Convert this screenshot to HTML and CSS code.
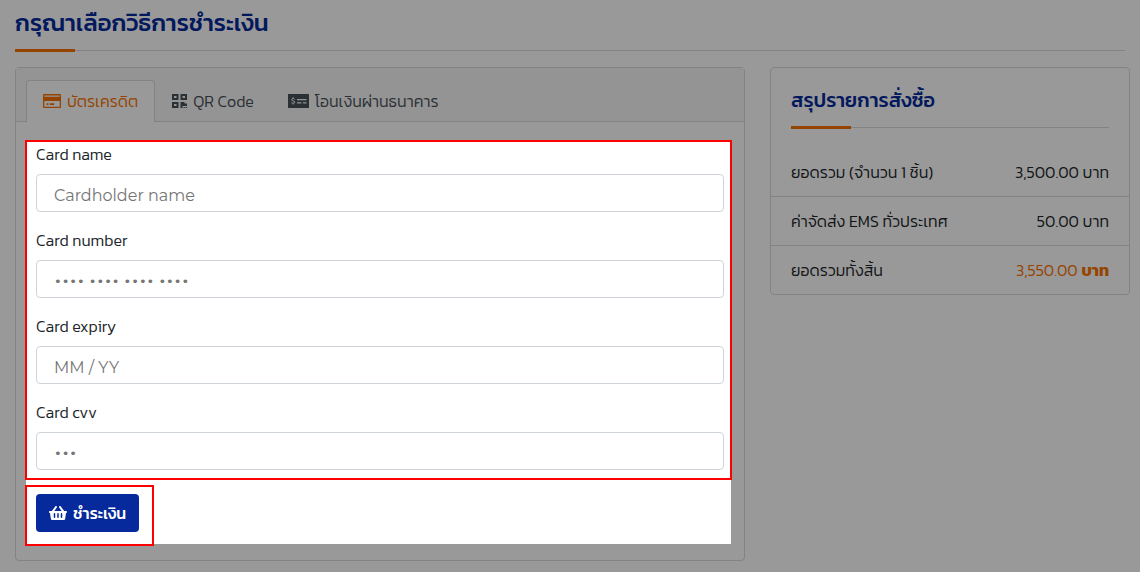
FILE: index.html
```
<!DOCTYPE html>
<html lang="th">
<head>
    <meta charset="UTF-8">
    <meta name="viewport" content="width=device-width, initial-scale=1.0">
    <title>ชำระเงิน</title>
    <link rel="stylesheet" href="styles.css">
</head>
<body>
    <h1 class="page-title">กรุณาเลือกวิธีการชำระเงิน</h1>

    <div class="row">
        <main class="col-main">
            <div class="card">
                <nav class="tabs">
                    <a href="#credit" class="tab active">
                        <svg class="icon" width="18" height="14" viewBox="0 0 18 14" fill="currentColor"><path fill-rule="evenodd" d="M1 0h16a1 1 0 0 1 1 1v12a1 1 0 0 1-1 1H1a1 1 0 0 1-1-1V1a1 1 0 0 1 1-1zm.3 1.500v1.300h15.400V1.500zM1.300 7v5.700h15.400V7zM3.500 9.300h2v1.700h-2zm3.300 0h4.400v1.700H6.800z"/></svg>
                        <span>บัตรเครดิต</span>
                    </a>
                    <a href="#qr" class="tab">
                        <svg class="icon" width="15" height="14" viewBox="0 0 15 14" fill="currentColor"><path fill-rule="evenodd" d="M0 0h6.500v6H0zm2 2v2h2.500V2zM8.500 0H15v6H8.500zm2 2v2H13V2zM0 8h6.500v6H0zm2 2v2h2.500v-2zM8.500 8h4v1.500H15V12h-4.500v2h-2zM11.500 13h1.300v1h-1.300zM13.700 13H15v1h-1.300z"/></svg>
                        <span>QR Code</span>
                    </a>
                    <a href="#transfer" class="tab">
                        <svg class="icon" width="21" height="14" viewBox="0 0 21 14" fill="currentColor"><path fill-rule="evenodd" d="M0 0h21v14H0zM9 5v1.200h9.500V5zm0 3.200v1.200h4.500V8.200zm6 0v1.200h3.500V8.200z"/><path class="icon-line" d="M6.700 5.200C6 4.300 3.600 4.400 3.600 5.700c0 1.600 3.200.8 3.200 2.400 0 1.400-2.600 1.400-3.400.5M5.100 3.300v1.300M5.100 9.200v1.300"/></svg>
                        <span>โอนเงินผ่านธนาคาร</span>
                    </a>
                </nav>

                <div class="card-body">
                    <form class="spotlight">
                        <div class="frame frame-fields">
                            <div class="field">
                                <label for="card-name">Card name</label>
                                <input type="text" id="card-name" placeholder="Cardholder name">
                            </div>
                            <div class="field">
                                <label for="card-number">Card number</label>
                                <input type="text" id="card-number" class="masked" placeholder="•••• •••• •••• ••••">
                            </div>
                            <div class="field">
                                <label for="card-expiry">Card expiry</label>
                                <input type="text" id="card-expiry" placeholder="MM / YY">
                            </div>
                            <div class="field">
                                <label for="card-cvv">Card cvv</label>
                                <input type="text" id="card-cvv" class="masked" placeholder="•••">
                            </div>
                        </div>
                        <div class="frame frame-pay">
                            <button type="button" class="btn-pay">
                                <svg class="icon" width="18" height="16" viewBox="0 0 576 512" fill="currentColor"><path d="M576 216v16c0 13.300-10.700 24-24 24h-8l-26.100 182.800C514.500 462.400 494.300 480 470.400 480H105.600c-23.900 0-44.100-17.600-47.500-41.200L32 256h-8c-13.300 0-24-10.700-24-24v-16c0-13.300 10.700-24 24-24h67.300l106.800-146.800c10.400-14.300 30.400-17.500 44.700-7.100s17.500 30.400 7.100 44.700L170.500 192h235.100L326.100 82.800c-10.400-14.300-7.200-34.300 7.100-44.700s34.300-7.200 44.700 7.100L484.700 192H552c13.300 0 24 10.700 24 24zM312 392V280c0-13.300-10.700-24-24-24s-24 10.700-24 24v112c0 13.300 10.700 24 24 24s24-10.700 24-24zm112 0V280c0-13.300-10.700-24-24-24s-24 10.700-24 24v112c0 13.300 10.700 24 24 24s24-10.700 24-24zm-224 0V280c0-13.300-10.700-24-24-24s-24 10.700-24 24v112c0 13.300 10.700 24 24 24s24-10.700 24-24z"/></svg>
                                <span>ชำระเงิน</span>
                            </button>
                        </div>
                    </form>
                </div>
            </div>
        </main>

        <aside class="col-side">
            <div class="card">
                <h2 class="summary-title">สรุปรายการสั่งซื้อ</h2>
                <ul class="summary">
                    <li><span>ยอดรวม (จำนวน 1 ชิ้น)</span><span>3,500.00 บาท</span></li>
                    <li><span>ค่าจัดส่ง EMS ทั่วประเทศ</span><span>50.00 บาท</span></li>
                    <li><span>ยอดรวมทั้งสิ้น</span><span class="total">3,550.00 <b>บาท</b></span></li>
                </ul>
            </div>
        </aside>
    </div>
</body>
</html>
```
FILE: styles.css
```
* {
    box-sizing: border-box;
}

body {
    margin: 0;
    min-height: 100vh;
    font-family: Kanit, "Open Sans", "Noto Sans Thai", sans-serif;
    font-size: 16px;
    font-weight: 300;
    line-height: 22px;
    color: #212529;
    background-color: #ffffff;
    overflow: hidden;
}

h1,
h2 {
    margin: 0;
    font-weight: 500;
    color: #062a9b;
    background-image: linear-gradient(#f97200, #f97200), linear-gradient(#d9dbdd, #d9dbdd);
    background-repeat: no-repeat;
    background-size: 60px 3px, 100% 1px;
    background-position: 0 100%, 0 calc(100% - 1px);
}

.page-title {
    margin: 0 15px 15px;
    padding: 7px 0 13px;
    font-size: 24px;
    line-height: 32px;
}

.row {
    display: flex;
    align-items: flex-start;
}

.col-main {
    width: 66.6667%;
    padding: 0 15px;
}

.col-side {
    width: 33.3333%;
    padding: 0 10px;
}

.card {
    border: 1px solid #dbdbdb;
    border-radius: 4px;
}

/* Tabs */
.tabs {
    display: flex;
    padding: 12px 10px 0;
    background-color: #f7f7f7;
    border-bottom: 1px solid #dbdbdb;
}

.tab {
    display: flex;
    align-items: center;
    gap: 6px;
    height: 42px;
    padding: 0 16px 2px;
    margin-bottom: -1px;
    border: 1px solid transparent;
    border-bottom: none;
    border-radius: 4px 4px 0 0;
    color: #495057;
    text-decoration: none;
    white-space: nowrap;
}

.tab.active {
    color: #f97200;
    background-color: #ffffff;
    border-color: #dbdbdb;
}

.icon {
    flex: none;
}

.icon-line {
    fill: none;
    stroke: #f7f7f7;
    stroke-width: 1;
}

/* Form */
.card-body {
    padding: 18px 13px 16px 10px;
}

/* everything outside the form is dimmed */
.spotlight {
    display: flow-root;
    position: relative;
    z-index: 1;
    background-color: #ffffff;
    box-shadow: 0 0 0 2000px rgba(0, 0, 0, 0.4);
}

.frame {
    border: 2px solid #ff0000;
}

.frame-fields {
    margin: 0 -1px 5px;
    padding: 1px 6px 8px 9px;
}

.frame-pay {
    width: fit-content;
    margin: 0 0 -2px -1px;
    padding: 7px 13px 12px 9px;
}

.field + .field {
    margin-top: 17px;
}

.field label {
    display: block;
    margin-bottom: 9px;
}

.field input {
    display: block;
    width: 100%;
    height: 38px;
    padding: 4px 17px 0;
    border: 1px solid #ced4da;
    border-radius: 4px;
    font-family: Montserrat, Inter, sans-serif;
    font-size: 16px;
    color: #495057;
    background-color: #ffffff;
}

.field input::placeholder {
    color: #757575;
}

.field .masked {
    font-family: "DejaVu Sans", sans-serif;
    font-size: 13px;
}

.btn-pay {
    display: flex;
    align-items: center;
    gap: 6px;
    height: 38px;
    padding: 0 13px;
    border: none;
    border-radius: 4px;
    font-family: inherit;
    font-size: 16px;
    font-weight: 500;
    color: #ffffff;
    background-color: #062a9b;
    cursor: pointer;
}

/* Order summary */
.summary-title {
    margin: 0 20px 19px;
    padding: 18px 0 15px;
    font-size: 20px;
    line-height: 28px;
}

.summary {
    margin: 0;
    padding: 0;
    list-style: none;
}

.summary li {
    display: flex;
    justify-content: space-between;
    padding: 13px 20px;
    border-bottom: 1px solid #dbdbdb;
    white-space: nowrap;
}

.summary li:last-child {
    border-bottom: none;
}

.total {
    color: #f97200;
}

.total b {
    font-weight: 700;
}
```
